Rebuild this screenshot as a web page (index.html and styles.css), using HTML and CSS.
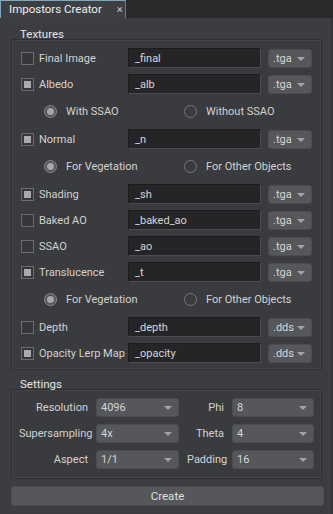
FILE: index.html
```html
<!DOCTYPE html>
<html lang="en">
<head>
  <meta charset="UTF-8">
  <title>Impostors Creator</title>
  <link rel="stylesheet" href="styles.css">
</head>
<body>

<div class="tabbar">
  <div class="tab">Impostors Creator <span class="close">&times;</span></div>
</div>

<div class="panel">
  <div class="group-title">Textures</div>
  <div class="frame textures">
    <div class="row">
      <label class="check"><span class="box"></span>Final Image</label>
      <div class="field">_final</div>
      <div class="combo">.tga</div>
    </div>
    <div class="row">
      <label class="check"><span class="box on"></span>Albedo</label>
      <div class="field">_alb</div>
      <div class="combo">.tga</div>
    </div>
    <div class="radios">
      <label class="radio"><span class="dot on"></span>With SSAO</label>
      <label class="radio"><span class="dot"></span>Without SSAO</label>
    </div>
    <div class="row">
      <label class="check"><span class="box on"></span>Normal</label>
      <div class="field">_n</div>
      <div class="combo">.tga</div>
    </div>
    <div class="radios">
      <label class="radio"><span class="dot on"></span>For Vegetation</label>
      <label class="radio"><span class="dot"></span>For Other Objects</label>
    </div>
    <div class="row">
      <label class="check"><span class="box on"></span>Shading</label>
      <div class="field">_sh</div>
      <div class="combo">.tga</div>
    </div>
    <div class="row">
      <label class="check"><span class="box"></span>Baked AO</label>
      <div class="field">_baked_ao</div>
      <div class="combo">.tga</div>
    </div>
    <div class="row">
      <label class="check"><span class="box"></span>SSAO</label>
      <div class="field">_ao</div>
      <div class="combo">.tga</div>
    </div>
    <div class="row">
      <label class="check"><span class="box on"></span>Translucence</label>
      <div class="field">_t</div>
      <div class="combo">.tga</div>
    </div>
    <div class="radios">
      <label class="radio"><span class="dot on"></span>For Vegetation</label>
      <label class="radio"><span class="dot"></span>For Other Objects</label>
    </div>
    <div class="row">
      <label class="check"><span class="box"></span>Depth</label>
      <div class="field">_depth</div>
      <div class="combo">.dds</div>
    </div>
    <div class="row">
      <label class="check"><span class="box on"></span>Opacity Lerp Map</label>
      <div class="field">_opacity</div>
      <div class="combo">.dds</div>
    </div>
  </div>

  <div class="group-title">Settings</div>
  <div class="frame settings">
    <span class="lbl">Resolution</span>
    <div class="combo">4096</div>
    <span class="lbl">Phi</span>
    <div class="combo">8</div>
    <span class="lbl">Supersampling</span>
    <div class="combo">4x</div>
    <span class="lbl">Theta</span>
    <div class="combo">4</div>
    <span class="lbl">Aspect</span>
    <div class="combo">1/1</div>
    <span class="lbl">Padding</span>
    <div class="combo">16</div>
  </div>

  <button class="create">Create</button>
</div>

</body>
</html>
```

FILE: styles.css
```css
html, body {
  margin: 0;
  padding: 0;
}
body {
  width: 333px;
  height: 514px;
  background-color: #2a2a2b;
  font-family: Roboto, "Liberation Sans", sans-serif;
  font-size: 11px;
  color: #d2d2d2;
  overflow: hidden;
}
.tabbar {
  height: 18px;
  display: flex;
}
.tab {
  width: 126px;
  height: 18px;
  box-sizing: border-box;
  padding-left: 8px;
  line-height: 17px;
  background-color: #3e3f42;
  border-top: 1px solid #7ea6c0;
  border-left: 1px solid #7ea6c0;
  border-right: 1px solid #5d7f94;
  color: #f0f0f0;
  font-size: 11.5px;
  white-space: nowrap;
}
.tab .close {
  margin-left: 12px;
  font-size: 11px;
  color: #c8c8c8;
}
.panel {
  height: 496px;
  box-sizing: border-box;
  background-color: #3c3d40;
  border-right: 2px solid #333436;
  padding: 9px 9px 0 11px;
}
.group-title {
  padding-left: 9px;
  line-height: 14px;
  height: 12px;
  color: #e4e4e4;
  font-size: 11.5px;
}
.frame {
  border: 1px solid #2f3032;
  box-shadow: inset 0 0 0 1px #434447;
  border-radius: 2px;
  background-color: #3a3b3e;
}
.textures {
  display: flex;
  flex-direction: column;
  gap: 6px;
  padding: 8px 9px 6px 9px;
}
.row {
  display: grid;
  grid-template-columns: minmax(0, 1fr) 133px 44px;
  column-gap: 7px;
  height: 20px;
  align-items: center;
}
.check {
  display: flex;
  align-items: center;
  gap: 5px;
  white-space: nowrap;
}
.box {
  flex: none;
  width: 11px;
  height: 11px;
  border: 1px solid #6b6c6f;
  background-color: #36373a;
  position: relative;
}
.box.on::after {
  content: "";
  position: absolute;
  left: 2px;
  top: 2px;
  width: 7px;
  height: 7px;
  background-color: #a9aaad;
}
.field {
  height: 20px;
  box-sizing: border-box;
  background-color: #252527;
  border: 1px solid #4a4b4e;
  border-top-color: #1c1c1d;
  border-left-color: #1c1c1d;
  padding-left: 6px;
  line-height: 19px;
  color: #d6d6d6;
}
.combo {
  height: 19px;
  box-sizing: border-box;
  background-color: #55575b;
  border: 1px solid #4a4c50;
  border-radius: 3px;
  padding-left: 4px;
  line-height: 17px;
  color: #d6d6d6;
  position: relative;
}
.combo::after {
  content: "";
  position: absolute;
  right: 6px;
  top: 7px;
  border-left: 4px solid transparent;
  border-right: 4px solid transparent;
  border-top: 4px solid #a3a4a7;
}
.radios {
  display: grid;
  grid-template-columns: 140px 1fr;
  height: 23px;
  align-items: center;
  padding-left: 23px;
}
.radio {
  display: flex;
  align-items: center;
  gap: 9px;
  white-space: nowrap;
}
.dot {
  flex: none;
  width: 11px;
  height: 11px;
  border: 1px solid #76777a;
  border-radius: 50%;
  position: relative;
}
.dot.on {
  background-color: #55565a;
  border-color: #8a8b8e;
}
.dot.on::after {
  content: "";
  position: absolute;
  left: 2px;
  top: 2px;
  width: 7px;
  height: 7px;
  border-radius: 50%;
  background-color: #a6a7aa;
}
.textures + .group-title {
  margin-top: 7px;
}
.settings {
  display: grid;
  grid-template-columns: 69px 83px 37px 82px;
  column-gap: 8px;
  row-gap: 7px;
  align-items: center;
  padding: 8px 9px 9px 7px;
}
.lbl {
  text-align: right;
  white-space: nowrap;
}
.create {
  display: block;
  width: 313px;
  height: 20px;
  margin-top: 7px;
  background-color: #55575b;
  border: 1px solid #4a4c50;
  border-radius: 3px;
  color: #e0e0e0;
  font-family: Roboto, "Liberation Sans", sans-serif;
  font-size: 11.5px;
  padding: 0;
}
```
